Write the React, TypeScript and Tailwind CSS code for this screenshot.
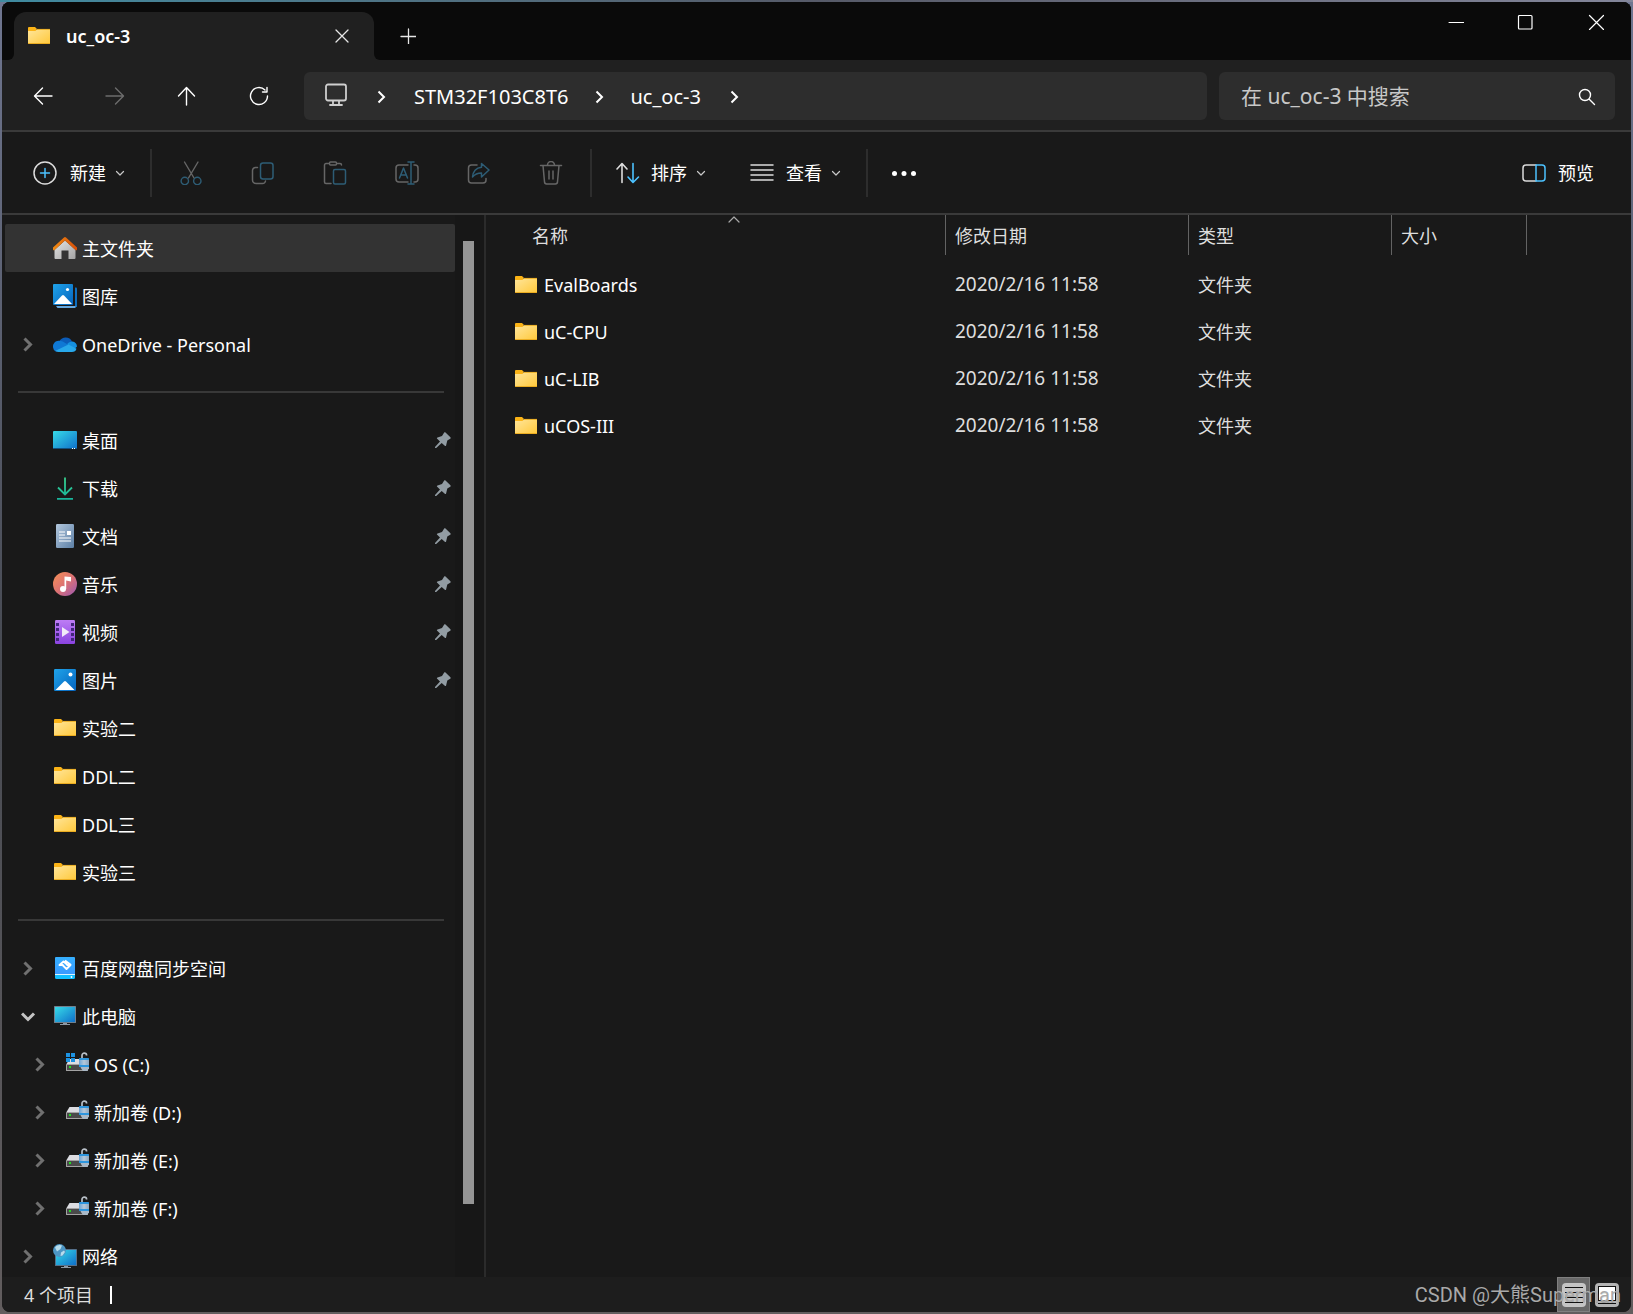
import React from "react";
import clsx from "clsx";

type IconName =
  | "home"
  | "gallery"
  | "onedrive"
  | "desktop"
  | "download"
  | "document"
  | "music"
  | "video"
  | "picture"
  | "folder"
  | "baidu"
  | "pc"
  | "os"
  | "drive"
  | "network";

type NavItem = {
  label: string;
  icon: IconName;
  arrow?: "right" | "down";
  pinned?: boolean;
  nested?: boolean;
  active?: boolean;
};

const groups: NavItem[][] = [
  [
    { label: "主文件夹", icon: "home", active: true },
    { label: "图库", icon: "gallery" },
    { label: "OneDrive - Personal", icon: "onedrive", arrow: "right" },
  ],
  [
    { label: "桌面", icon: "desktop", pinned: true },
    { label: "下载", icon: "download", pinned: true },
    { label: "文档", icon: "document", pinned: true },
    { label: "音乐", icon: "music", pinned: true },
    { label: "视频", icon: "video", pinned: true },
    { label: "图片", icon: "picture", pinned: true },
    { label: "实验二", icon: "folder" },
    { label: "DDL二", icon: "folder" },
    { label: "DDL三", icon: "folder" },
    { label: "实验三", icon: "folder" },
  ],
  [
    { label: "百度网盘同步空间", icon: "baidu", arrow: "right" },
    { label: "此电脑", icon: "pc", arrow: "down" },
    { label: "OS (C:)", icon: "os", arrow: "right", nested: true },
    { label: "新加卷 (D:)", icon: "drive", arrow: "right", nested: true },
    { label: "新加卷 (E:)", icon: "drive", arrow: "right", nested: true },
    { label: "新加卷 (F:)", icon: "drive", arrow: "right", nested: true },
    { label: "网络", icon: "network", arrow: "right" },
  ],
];

const files = ["EvalBoards", "uC-CPU", "uC-LIB", "uCOS-III"].map((name) => ({
  name,
  date: "2020/2/16 11:58",
  type: "文件夹",
}));

// gradients shared by all the icons on the page
const Gradients = () => (
  <svg width="0" height="0" className="absolute" aria-hidden="true">
    <defs>
      <linearGradient id="g-folder" x1="0" y1="0" x2="1" y2="1">
        <stop offset="0" stopColor="#ffe69c" />
        <stop offset="1" stopColor="#ffc83a" />
      </linearGradient>
      <linearGradient id="g-screen" x1="0" y1="0" x2="1" y2="1">
        <stop offset="0" stopColor="#37dbe8" />
        <stop offset="1" stopColor="#0f6fc9" />
      </linearGradient>
      <linearGradient id="g-blue" x1="0" y1="0" x2="1" y2="1">
        <stop offset="0" stopColor="#1fa3ea" />
        <stop offset="1" stopColor="#0664bd" />
      </linearGradient>
      <linearGradient id="g-roof" x1="0" y1="0" x2="1" y2="0">
        <stop offset="0" stopColor="#f08a12" />
        <stop offset="1" stopColor="#d84f08" />
      </linearGradient>
      <linearGradient id="g-wall" x1="0" y1="0" x2="1" y2="1">
        <stop offset="0" stopColor="#e4e4e4" />
        <stop offset="1" stopColor="#a4a4a4" />
      </linearGradient>
      <linearGradient id="g-green" x1="0" y1="0" x2="0" y2="24" gradientUnits="userSpaceOnUse">
        <stop offset="0" stopColor="#3ad08c" />
        <stop offset="1" stopColor="#17b39c" />
      </linearGradient>
      <linearGradient id="g-doc" x1="0" y1="0" x2="1" y2="1">
        <stop offset="0" stopColor="#b3c8de" />
        <stop offset="1" stopColor="#5c7fa5" />
      </linearGradient>
      <linearGradient id="g-music" x1="0" y1="0" x2="1" y2="1">
        <stop offset="0.1" stopColor="#f08a5a" />
        <stop offset="0.5" stopColor="#dc7273" />
        <stop offset="1" stopColor="#9a57b4" />
      </linearGradient>
      <linearGradient id="g-video" x1="0" y1="0" x2="0" y2="1">
        <stop offset="0" stopColor="#bd7df5" />
        <stop offset="1" stopColor="#8a43e0" />
      </linearGradient>
      <linearGradient id="g-baidu" x1="0" y1="0" x2="0" y2="1">
        <stop offset="0" stopColor="#35b0ff" />
        <stop offset="1" stopColor="#3a97ff" />
      </linearGradient>
      <linearGradient id="g-lock" x1="0" y1="0" x2="1" y2="0">
        <stop offset="0" stopColor="#6ba4d4" />
        <stop offset="0.5" stopColor="#b5c8da" />
        <stop offset="1" stopColor="#8fa6bd" />
      </linearGradient>
    </defs>
  </svg>
);

const Drive = () => (
  <>
    <path d="M4.500 7H20l2.500 5H1.500z" fill="#dcdde2" />
    <rect x="1" y="12" width="22" height="7" rx="0.6" fill="#a3a3a3" />
    <rect x="2" y="13" width="20" height="5" fill="#4a4a4a" />
    <rect x="4" y="14" width="2" height="2" fill="#1fe01f" />
    <path d="M17 6V3.400a2.300 2.300 0 0 1 4.600 0" fill="none" stroke="#b9c0c8" strokeWidth="1.7" />
    <rect x="14" y="6" width="10" height="9" rx="0.6" fill="#2d95dd" />
    <rect x="14" y="8" width="10" height="5" fill="url(#g-lock)" />
    <path d="M15.500 15h8.500v1.500l-2 2.500h-4l-1.500-2z" fill="#a9b8c6" />
  </>
);

const paths: Record<IconName, React.ReactNode> = {
  home: (
    <>
      <path d="M12 4.500 1.500 14v8a1 1 0 0 0 1 1h6v-8.500h7V23h6a1 1 0 0 0 1-1v-8z" fill="url(#g-wall)" />
      <path
        d="M11 1.500a1.500 1.500 0 0 1 2 0L24 11.600v2.200l-1 .6-11-10-11 10-1-.6v-2.200z"
        fill="url(#g-roof)"
      />
    </>
  ),
  gallery: (
    <>
      <path d="M22 3.500h1a1 1 0 0 1 1 1V23h-2z" fill="#0f6fc0" />
      <path d="M3 22h19.500v2H4.500z" fill="#66a9e0" />
      <rect x="0" y="0" width="20" height="21" rx="1" fill="url(#g-blue)" />
      <path d="M1 20 9 11.500a1.500 1.500 0 0 1 2 0L19 20z" fill="#fff" />
      <circle cx="14.500" cy="5.500" r="1.600" fill="#fff" />
    </>
  ),
  onedrive: (
    <>
      <path d="M6.500 9.200A7 7 0 0 1 19 9.500l-6 6z" fill="#0b5cb8" />
      <path d="M5.500 8.800c2-.2 3.800.4 5.500 1.400l5 3-13 6.500A5.500 5.500 0 0 1 0 14.500c0-3 2.400-5.500 5.500-5.700z" fill="#0f78d4" />
      <path d="M14 12.200c1.500-1.800 3.500-2.700 5.500-2.600 2.600.2 4.500 2.500 4.500 5l-3 3z" fill="#1590df" />
      <path d="M2.500 18.800 15.500 12.500l8 4.200c-.6 2.100-2.300 3.300-4.500 3.300H5.500c-1.200 0-2.200-.4-3-1.200z" fill="#28a8ea" />
    </>
  ),
  desktop: (
    <>
      <rect x="0" y="3" width="24" height="18" rx="1" fill="url(#g-screen)" />
      <path d="M0 20h24v.5l-.5.5H.5L0 20.500z" fill="#11507f" />
      <path d="M19 20h1v1h-1zM21 20h1v1h-1z" fill="#fff" />
    </>
  ),
  download: (
    <path d="M12 1.500V18M5 11.500l7 7 7-7M4 22.800h16" fill="none" stroke="url(#g-green)" strokeWidth="1.800" />
  ),
  document: (
    <>
      <rect x="3" y="0" width="18" height="24" rx="1.200" fill="url(#g-doc)" />
      <path d="M6 8h6M6 11h6M6 14h12M6 17h12" stroke="#fff" strokeWidth="1.200" />
      <rect x="14" y="7" width="4" height="4" fill="#fff" />
    </>
  ),
  music: (
    <>
      <circle cx="12" cy="12" r="12" fill="url(#g-music)" />
      <circle cx="10" cy="17" r="3" fill="#fff" />
      <path d="M11.500 4.500 18 5v4.500l-4.800-1V17h-1.700z" fill="#fff" />
    </>
  ),
  video: (
    <>
      <rect x="2" y="0" width="20" height="24" rx="1.200" fill="url(#g-video)" />
      <path
        d="M3 3h3v3H3zM3 8h3v3H3zM3 13h3v3H3zM3 18h3v3H3zM18 3h3v3h-3zM18 8h3v3h-3zM18 13h3v3h-3zM18 18h3v3h-3z"
        fill="#41267a"
      />
      <path d="M9 7v10l7.500-5z" fill="#f1ebf8" />
    </>
  ),
  picture: (
    <>
      <rect x="1" y="1" width="22" height="22" rx="1.200" fill="url(#g-blue)" />
      <path d="M2.500 22 11 13.400a1.400 1.400 0 0 1 2 0L21.500 22z" fill="#fff" />
      <circle cx="17.500" cy="6.500" r="2" fill="#fff" />
    </>
  ),
  folder: (
    <>
      <path d="M1 4a1 1 0 0 1 1-1h6l1.500 1.500V8H1z" fill="#fbb316" />
      <path d="M1 7h7.500L10 5h12.500a.5.500 0 0 1 .5.500V19a1 1 0 0 1-1 1H2a1 1 0 0 1-1-1z" fill="url(#g-folder)" />
      <path d="M1 19.500h22M10 5.400h13" stroke="#e9a81c" strokeWidth="0.900" />
    </>
  ),
  baidu: (
    <>
      <path d="M3 1h18a1 1 0 0 1 1 1v18H2V2a1 1 0 0 1 1-1z" fill="url(#g-baidu)" />
      <path d="M2 19h20v2.500a1.500 1.500 0 0 1-1.500 1.500h-17A1.500 1.500 0 0 1 2 21.500z" fill="#12bfff" />
      <path d="M2 18.500h20" stroke="#d9f3ff" strokeWidth="1" />
      <circle cx="18.500" cy="21" r="0.900" fill="#fff" />
      {/* two interlocking hooks */}
      <path
        d="M14 8.500 10.500 5.500 6.500 9H10.500M10 9.500l3.500 3.500 4-4H13.500M12 4.500l6 4.500"
        fill="none"
        stroke="#fff"
        strokeWidth="1.900"
        strokeLinejoin="round"
      />
    </>
  ),
  pc: (
    <>
      <rect x="1" y="2" width="22" height="17" rx="0.600" fill="#71808e" />
      <rect x="2" y="3" width="20" height="15" fill="url(#g-screen)" />
      <path d="M10 19h4v1h3v1H7v-1h3z" fill="#8d99a5" />
    </>
  ),
  os: (
    <>
      <Drive />
      <path d="M1 1h4v4H1zM6 1h4v4H6zM1 6h4v4H1zM6 6h4v4H6z" fill="#1d93e3" />
    </>
  ),
  drive: <Drive />,
  network: (
    <>
      <rect x="2" y="5" width="22" height="17" rx="0.600" fill="#55708a" />
      <rect x="3" y="6" width="20" height="15" fill="url(#g-screen)" />
      <path d="M11 22h4v1h3v1H8v-1h3z" fill="#8d99a5" />
      <circle cx="6.500" cy="6.500" r="6.500" fill="#4d96c4" />
      <path d="M2 3.500C4 .8 7 .6 9 1.500L7.500 5 4 7.500zM8 8.500l3-2 1 1.500-2.500 3.500-2 .5z" fill="#b7dcec" />
    </>
  ),
};

const Icon = ({ name }: { name: IconName }) => (
  <svg width="24" height="24" viewBox="0 0 24 24" className="shrink-0" aria-hidden="true">
    {paths[name]}
  </svg>
);

// thin line icons of the toolbars
const Line = ({
  d,
  accent,
  size = 24,
  width = 1.5,
  square,
  className,
}: {
  d: string;
  accent?: string;
  size?: number;
  width?: number;
  square?: boolean;
  className?: string;
}) => (
  <svg
    width={size}
    height={size}
    viewBox={`0 0 ${size} ${size}`}
    fill="none"
    stroke="currentColor"
    strokeWidth={width}
    strokeLinecap={square ? "butt" : "round"}
    strokeLinejoin={square ? "miter" : "round"}
    className={clsx("shrink-0", className)}
    aria-hidden="true"
  >
    <path d={d} />
    {accent && <path d={accent} className="stroke-[#4cc2ff]" />}
  </svg>
);

const Caret = () => <Line size={12} width={1.2} d="M2.500 4.500 6 8l3.500-3.500" className="text-[#c8c8c8]" />;

const Crumb = () => <Line size={14} width={2} d="M4.500 1.500 10 7l-5.500 5.500" square className="text-white" />;

const Pin = () => (
  <svg width="16" height="16" viewBox="0 0 16 16" className="shrink-0" aria-hidden="true">
    <path
      d="M9.200.5c.4-.4 1-.3 1.300.1l4.900 4.700c.5.500.4 1.100-.2 1.400l-2.900 1.900-1.200 4.800c-.2.700-.8.900-1.300.4L6.700 11 1.200 16l-1.100-.1-.1-1L5 9.500 2.200 6.700c-.5-.5-.3-1.100.3-1.300l4.500-1.300z"
      fill="#929ca3"
    />
  </svg>
);

const TitleBar = () => (
  <header className="flex h-[58px] shrink-0 items-start bg-[#0a0a0a]">
    <div className="flex h-[58px] w-3 items-end bg-[#202020]">
      <div className="h-full w-full rounded-br-md bg-[#0a0a0a]" />
    </div>
    <div className="flex h-full bg-[#202020]">
      <div className="h-full bg-[#0a0a0a]">
        <div className="mt-[10px] flex h-12 w-[360px] items-center rounded-t-xl bg-[#202020] pr-6 pl-[13px]">
          <Icon name="folder" />
          <span className="ml-[15px] grow text-lg font-semibold text-white">uc_oc-3</span>
          <button type="button" aria-label="关闭标签页" className="text-[#e6e6e6]">
            <Line size={16} width={1.3} d="M2 2l12 12M14 2 2 14" />
          </button>
        </div>
      </div>
    </div>
    <div className="flex h-full grow bg-[#202020]">
      <div className="flex grow items-start rounded-bl-md bg-[#0a0a0a]">
        <button type="button" aria-label="新标签页" className="mt-[26px] ml-[26px] text-[#e6e6e6]">
          <Line size={16} width={1.3} d="M8.500 1v15M1 8.500h15" />
        </button>
        <div className="mt-3 ml-auto flex pr-[27px] text-white">
          <button type="button" aria-label="最小化">
            <Line size={16} width={1} d="M1 8.500h15" />
          </button>
          <button type="button" aria-label="最大化" className="ml-[53px]">
            <Line size={16} width={1.2} d="M2.500 1.500H14a1 1 0 0 1 1 1V14a1 1 0 0 1-1 1H2.500a1 1 0 0 1-1-1V2.500a1 1 0 0 1 1-1z" />
          </button>
          <button type="button" aria-label="关闭" className="ml-[55px]">
            <Line size={16} width={1.2} d="M1.500 1.500l14 14M15.500 1.500l-14 14" />
          </button>
        </div>
      </div>
    </div>
  </header>
);

const AddressBar = () => (
  <div className="flex h-[72px] shrink-0 items-center border-b-2 border-[#3a3a3a] bg-[#202020] pt-[2px] pr-4 pl-[29px] text-white">
    <div className="flex w-[273px] gap-12">
      <button type="button" aria-label="后退">
        <Line d="M21 12H4M11.500 4 3.500 12l8 8" width={1.4} />
      </button>
      <button type="button" aria-label="前进" className="text-[#6c6c6c]">
        <Line d="M3 12h17M12.500 4l8 8-8 8" width={1.4} />
      </button>
      <button type="button" aria-label="向上">
        <Line d="M11.500 21V4M3.500 12l8-8.500 8 8.500" width={1.4} />
      </button>
      <button type="button" aria-label="刷新">
        <Line d="M20.500 12A8.500 8.500 0 1 1 18 6.000M20 3.500V8h-4.500" width={1.4} />
      </button>
    </div>
    <nav className="flex h-12 grow items-center rounded-md bg-[#2d2d2d] pt-[2px] pl-5 text-xl">
      <Line
        d="M4 1.500h16a2 2 0 0 1 2 2v12a2 2 0 0 1-2 2H4a2 2 0 0 1-2-2v-12a2 2 0 0 1 2-2zM9 18v3M15 18v3M6 22h12"
        className="mb-1 text-[#cfcfcf]"
        width={1.8}
      />
      <span className="ml-[26px]">
        <Crumb />
      </span>
      <a href="#stm32" className="ml-[26px]">
        STM32F103C8T6
      </a>
      <span className="ml-6">
        <Crumb />
      </span>
      <a href="#uc_oc-3" className="ml-6">
        uc_oc-3
      </a>
      <span className="ml-[26px]">
        <Crumb />
      </span>
    </nav>
    <label className="ml-3 flex h-12 w-[396px] items-center rounded-md bg-[#2d2d2d] pt-[2px] pr-[19px] pl-[22px] text-[21px]">
      <input
        type="text"
        placeholder="在 uc_oc-3 中搜索"
        aria-label="搜索"
        className="min-w-0 grow bg-transparent outline-none placeholder:text-[#c8c8c8]"
      />
      <Line size={18} d="M12.500 7a5.500 5.500 0 1 1-11 0 5.500 5.500 0 0 1 11 0zM11 11l5.500 5.500" width={1.4} />
    </label>
  </div>
);

const Divider = () => <div className="h-12 w-[2px] shrink-0 bg-[#2d2d2d]" />;

const CommandBar = () => (
  <div className="flex h-[83px] shrink-0 items-center border-b-2 border-[#3a3a3a] bg-[#191919] pr-[37px] pl-[30px] text-lg text-white">
    <button type="button" className="flex items-center">
      <Line
        size={26}
        d="M24 13a11 11 0 1 1-22 0 11 11 0 0 1 22 0z"
        accent="M13 8.500v9M8.500 13h9"
        className="text-[#dcdcdc]"
      />
      <span className="mr-2 ml-3">新建</span>
      <Caret />
    </button>
    <div className="mr-[27px] ml-6">
      <Divider />
    </div>
    <div className="mr-[27px] flex gap-12 text-[#d9d9d9] [&>button]:opacity-40">
      <button type="button" aria-label="剪切">
        <Line
          d="M5.500 1 15 17M19 1 9.500 17"
          accent="M9.500 20a3.700 3.700 0 1 1-7.400 0 3.700 3.700 0 0 1 7.400 0zM22 20a3.700 3.700 0 1 1-7.400 0 3.700 3.700 0 0 1 7.400 0z"
          width={1.4}
        />
      </button>
      <button type="button" aria-label="复制">
        <Line
          d="M6.500 6.500H4.500a3 3 0 0 0-3 3V19a3.500 3.500 0 0 0 3.500 3.500h6.500a3 3 0 0 0 3-2.500"
          accent="M12 2h7.500A2.500 2.500 0 0 1 22 4.500v11a2.500 2.500 0 0 1-2.500 2.500H12a2.500 2.500 0 0 1-2.500-2.500v-11A2.500 2.500 0 0 1 12 2z"
        />
      </button>
      <button type="button" aria-label="粘贴">
        <Line
          d="M8 22.500H3a1.500 1.500 0 0 1-1.500-1.500V4A1.500 1.500 0 0 1 3 2.500h3M14 2.500h3A1.500 1.500 0 0 1 18.500 4M7.500 1h5a1 1 0 0 1 1 1v1a1 1 0 0 1-1 1h-5a1 1 0 0 1-1-1V2a1 1 0 0 1 1-1z"
          accent="M12 8.500h9a1.500 1.500 0 0 1 1.500 1.500v11.500A1.500 1.500 0 0 1 21 23h-9a1.500 1.500 0 0 1-1.500-1.500V10A1.500 1.500 0 0 1 12 8.500z"
        />
      </button>
      <button type="button" aria-label="重命名">
        <Line
          d="M13 21H4a3 3 0 0 1-3-3V7a3 3 0 0 1 3-3h9M19 4h1a3 3 0 0 1 3 3v11a3 3 0 0 1-3 3h-1"
          accent="M16 1v22M13 1h6M13 23h6M4.500 17 8.500 7l4 10M6 14h5.200"
        />
      </button>
      <button type="button" aria-label="共享">
        <Line
          d="M10 4H4.500a3 3 0 0 0-3 3v12a3 3 0 0 0 3 3H16a3 3 0 0 0 3-3v-1.500"
          accent="M14.500 2.500l7.500 6.500-7.500 7v-4c-4 0-6.500 1-9 4 .4-5 3.500-9.500 9-9.800z"
        />
      </button>
      <button type="button" aria-label="删除">
        <Line d="M1.500 4.500h21M4 4.500l1.500 16.300A2.200 2.200 0 0 0 7.700 23h8.600a2.200 2.200 0 0 0 2.200-2.200L20 4.500M8.500 4a3.200 3.200 0 0 1 7 0M10 10v8M14 10v8" />
      </button>
    </div>
    <Divider />
    <button type="button" className="ml-6 flex items-center">
      <Line d="M6 21.500V3M1 8l5-5.500L11 8" accent="M17 2.500V21M12 16l5 5.500L22.500 16" width={1.6} className="text-[#dcdcdc]" />
      <span className="mr-2 ml-[11px]">排序</span>
      <Caret />
    </button>
    <button type="button" className="ml-[43px] flex items-center">
      <Line d="M1 4h22M1 9h22M1 14h22M1 19h22" className="text-[#dcdcdc]" />
      <span className="mr-2 ml-3">查看</span>
      <Caret />
    </button>
    <div className="mr-[23px] ml-6">
      <Divider />
    </div>
    <button type="button" aria-label="查看更多">
      <svg width="26" height="24" viewBox="0 0 26 24" fill="currentColor" aria-hidden="true">
        <circle cx="3.500" cy="12.500" r="2.500" />
        <circle cx="13" cy="12.500" r="2.500" />
        <circle cx="22.500" cy="12.500" r="2.500" />
      </svg>
    </button>
    <button type="button" className="ml-auto flex items-center gap-3">
      <Line
        d="M14 20H4a3 3 0 0 1-3-3V7a3 3 0 0 1 3-3h10"
        accent="M14 4h6a3 3 0 0 1 3 3v10a3 3 0 0 1-3 3h-6z"
        className="text-[#dcdcdc]"
      />
      预览
    </button>
  </div>
);

const NavRow = ({ item }: { item: NavItem }) => (
  <li>
    <a
      href="#"
      className={clsx(
        "flex h-12 items-center pr-1",
        item.nested ? "pl-7" : "pl-4",
        item.active && "rounded-xs bg-[#333333]"
      )}
    >
      <span className="w-8">
        {item.arrow === "right" && (
          <Line size={15} width={3} d="M3.500 1.500 9.500 7.500l-6 6" square className="text-[#707070]" />
        )}
        {item.arrow === "down" && (
          <Line size={15} width={3} d="M1 4.500l6 6 6-6" square className="text-[#c4c4c4]" />
        )}
      </span>
      <Icon name={item.icon} />
      <span className="ml-[5px] grow pt-[2px]">{item.label}</span>
      {item.pinned && <Pin />}
    </a>
  </li>
);

const Sidebar = () => (
  <aside className="flex w-[484px] shrink-0 overflow-hidden border-r-2 border-[#2b2b2b]">
    <nav className="ml-[3px] w-[450px] overflow-hidden pt-[9px] text-lg text-white">
      {groups.map((group, i) => (
        <React.Fragment key={i}>
          {i > 0 && (
            <div className="flex h-12 items-center pr-[11px] pl-[13px]">
              <div className="h-[2px] grow bg-[#383838]" />
            </div>
          )}
          <ul>
            {group.map((item) => (
              <NavRow key={item.label} item={item} />
            ))}
          </ul>
        </React.Fragment>
      ))}
    </nav>
    <div className="grow bg-[#171717] pt-[26px] pl-2">
      <div className="h-[93%] w-[11px] bg-[#959595]" />
    </div>
  </aside>
);

const headers = ["名称", "修改日期", "类型", "大小"];

const FileList = () => (
  <main className="grow overflow-hidden">
    <table className="w-full table-fixed text-left text-lg text-[#dedede]">
      <colgroup>
        <col className="w-[460px]" />
        <col className="w-[243px]" />
        <col className="w-[203px]" />
        <col className="w-[135px]" />
        <col />
      </colgroup>
      <thead>
        <tr>
          {headers.map((h, i) => (
            <th key={h} className="h-[46px] p-0 align-top font-normal">
              <div
                className={clsx(
                  "relative flex h-10 items-center border-r border-[#636363] pt-[2px]",
                  i === 0 ? "pl-[46px]" : "pl-[9px]"
                )}
              >
                {h}
                {i === 0 && (
                  <Line
                    size={12}
                    width={1.2}
                    d="M1 7l5-5 5 5"
                    className="absolute top-0 left-[242px] text-[#a8a8a8]"
                  />
                )}
              </div>
            </th>
          ))}
          <th className="p-0" />
        </tr>
      </thead>
      <tbody>
        {files.map((file) => (
          <tr key={file.name} className="h-[47px]">
            <td className="p-0">
              <div className="flex items-center gap-[6px] pl-7 text-white">
                <Icon name="folder" />
                {file.name}
              </div>
            </td>
            <td className="p-0 pl-[9px] text-[19px]">{file.date}</td>
            <td className="p-0 pl-[9px]">{file.type}</td>
            <td />
            <td />
          </tr>
        ))}
      </tbody>
    </table>
  </main>
);

const StatusBar = () => (
  <footer className="relative flex h-[35px] shrink-0 items-center bg-[#1d1d1d] pr-3 pl-[22px] text-lg text-[#dedede]">
    <span>4 个项目</span>
    <span className="ml-[17px] h-[18px] w-[2px] bg-white" />
    <div className="ml-auto flex h-full items-center gap-[5px]">
      <button
        type="button"
        aria-label="详细信息"
        className="flex h-full w-[33px] items-center justify-center border border-[#808080] bg-[#686868]"
      >
        <svg width="24" height="24" viewBox="0 0 24 24" aria-hidden="true">
          <rect width="24" height="24" rx="4" fill="#c4c4c4" />
          <path d="M3 4.500h18M3 9.500h18M3 14.500h18M3 19.500h18" stroke="#111" />
        </svg>
      </button>
      <button type="button" aria-label="大图标">
        <svg width="24" height="24" viewBox="0 0 24 24" aria-hidden="true">
          <rect width="24" height="24" rx="4" fill="#b4b4b4" />
          <rect x="3.500" y="3.500" width="17" height="14" fill="#fff" stroke="#111" />
          <path d="M3 20.500h18" stroke="#111" />
        </svg>
      </button>
    </div>
    <span className="absolute top-1 right-[10px] font-['Roboto','Noto_Sans_CJK_SC',sans-serif] text-xl leading-7 text-[#a9a9a9] text-shadow-2xs">
      CSDN @大熊Superman
    </span>
  </footer>
);

const App = () => (
  <div className="flex h-screen flex-col bg-linear-to-b from-[#6f7690] via-[#474a52] to-[#625d5e] font-['Noto_Sans','Noto_Sans_CJK_SC',sans-serif]">
    <Gradients />
    <div className="h-[2px] shrink-0 bg-linear-to-r from-[#3f8ba0] via-[#565a68] to-[#83869a]" />
    <div className="mx-[2px] mb-[2px] flex min-h-0 grow flex-col overflow-hidden rounded-lg bg-[#191919]">
      <TitleBar />
      <AddressBar />
      <CommandBar />
      <div className="flex min-h-0 grow">
        <Sidebar />
        <FileList />
      </div>
      <StatusBar />
    </div>
  </div>
);

export default App;
